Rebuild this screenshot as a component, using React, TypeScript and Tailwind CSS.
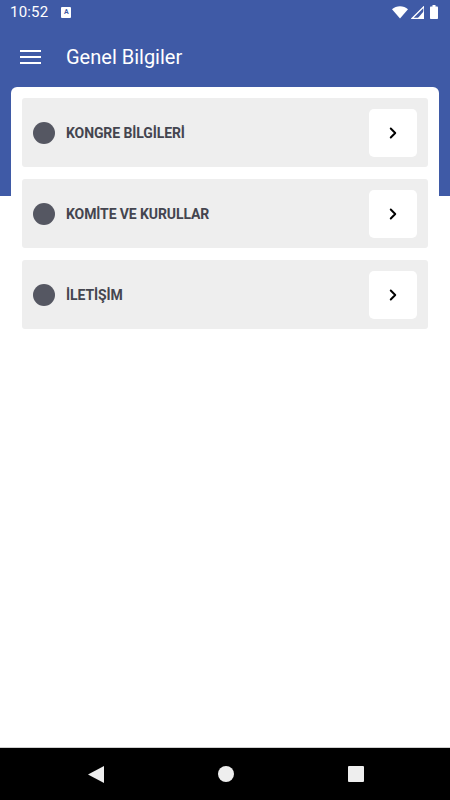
import React from 'react';
import { ChevronRight } from 'lucide-react';

const items = ['KONGRE BİLGİLERİ', 'KOMİTE VE KURULLAR', 'İLETİŞİM'];

function StatusBar() {
  return (
    <div className="h-6 flex items-center justify-between pl-[10px] pr-[12px] text-white">
      <div className="flex items-center gap-[13px]">
        <span className="text-[15px] leading-none tracking-[0.2px]">10:52</span>
        <div className="w-[10px] h-[11px] bg-white rounded-[1px] flex items-center justify-center">
          <span className="text-[7px] font-bold leading-none text-[#3f5aa6]">A</span>
        </div>
      </div>
      <div className="flex items-center gap-[3px]">
        <svg width="16" height="13" viewBox="0 0 16 13">
          <path d="M8 12.5L0 3.2C2.2 1.3 5 0.2 8 0.2s5.8 1.1 8 3z" fill="#fff" />
        </svg>
        <svg width="13" height="13" viewBox="0 0 13 13">
          <path d="M13 0.5V12.5H1z" fill="none" stroke="#fff" strokeWidth="1.3" />
          <path d="M13 5V12.5H6.5z" fill="#fff" />
        </svg>
        <svg width="8" height="14" viewBox="0 0 8 14" className="ml-[3px]">
          <rect x="2.5" y="0" width="3" height="2" fill="#fff" />
          <rect x="0" y="1.5" width="8" height="12.5" rx="0.8" fill="#fff" />
        </svg>
      </div>
    </div>
  );
}

function Row({ label }: { label: string }) {
  return (
    <div className="h-[69px] bg-[#eeeeee] rounded-[3px] flex items-center pl-[11px] pr-[11px]">
      <div className="w-[22px] h-[22px] rounded-full bg-[#555762]" />
      <span className="ml-[11px] flex-1 text-[14px] font-bold text-[#44454f] tracking-[-0.1px] pt-[1px]">{label}</span>
      <div className="w-[48px] h-[48px] bg-white rounded-[5px] flex items-center justify-center">
        <ChevronRight className="w-[18px] h-[18px] text-black" strokeWidth={2.6} />
      </div>
    </div>
  );
}

export default function App() {
  return (
    <div className="w-[450px] h-[800px] flex flex-col bg-white" style={{ fontFamily: 'Roboto, "Noto Sans", sans-serif' }}>
      <div className="flex-1 flex flex-col bg-[linear-gradient(to_bottom,#3f5aa6_196px,#ffffff_196px)]">
        <StatusBar />
        <div className="h-[63px] flex items-center pt-[2px] text-white">
          <div className="w-[66px] flex justify-start pl-[20px]">
            <div className="flex flex-col gap-[4px]">
              <div className="w-[21px] h-[2px] bg-white" />
              <div className="w-[21px] h-[2px] bg-white" />
              <div className="w-[21px] h-[2px] bg-white" />
            </div>
          </div>
          <span className="text-[20px] leading-none">Genel Bilgiler</span>
        </div>
        <div className="mx-[11px] bg-white rounded-t-[6px] p-[11px] flex flex-col gap-[12px]">
          {items.map((it) => (
            <Row key={it} label={it} />
          ))}
        </div>
      </div>
      <div className="h-[53px] bg-black border-t border-[#cfcfcf] flex items-center justify-center">
        <div className="flex items-center gap-[114px] pl-[2px]">
          <svg width="16" height="17" viewBox="0 0 16 17">
            <path d="M16 0V17L0 8.5z" fill="#eeeeee" />
          </svg>
          <div className="w-[16px] h-[16px] rounded-full bg-[#eeeeee]" />
          <div className="w-[16px] h-[16px] rounded-[1px] bg-[#eeeeee]" />
        </div>
      </div>
    </div>
  );
}
